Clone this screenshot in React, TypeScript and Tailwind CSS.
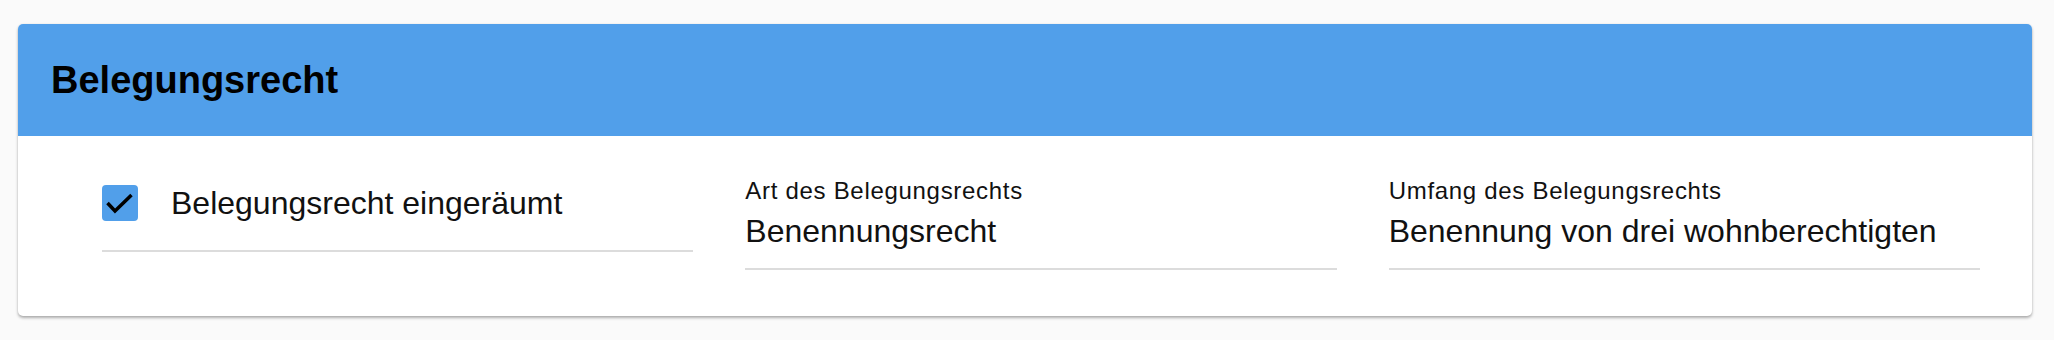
import type { ReactNode } from 'react'

const font = { fontFamily: '"Liberation Sans", Arial, sans-serif' }

function CheckField({ label, checked }: { label: string; checked: boolean }) {
  return (
    <div className="pt-[8px]">
      <div className="flex items-center gap-[33px] border-b-2 border-[#dcdcdc] pb-[29px]">
        <span className="inline-flex h-[36px] w-[36px] shrink-0 items-center justify-center rounded-[4px] bg-[#519fea]">
          {checked && (
            <svg width="36" height="36" viewBox="0 0 36 36" fill="none" aria-hidden>
              <path
                d="M5.5 18 L13 26 L29.5 10"
                stroke="#000"
                strokeWidth="3.5"
                strokeLinecap="butt"
                strokeLinejoin="miter"
              />
            </svg>
          )}
        </span>
        <span className="text-[32px] leading-[36px] text-[#111]">{label}</span>
      </div>
    </div>
  )
}

function ReadField({ label, children }: { label: string; children: ReactNode }) {
  return (
    <div className="border-b-2 border-[#dcdcdc] pb-[18px]">
      <div className="text-[24px] leading-[28px] tracking-[0.7px] text-[#111]">{label}</div>
      <div className="mt-[7px] whitespace-nowrap text-[32px] leading-[38px] text-[#111]">
        {children}
      </div>
    </div>
  )
}

export default function App() {
  return (
    <div className="min-h-[340px] bg-[#fafafa] pb-[24px] pl-[18px] pr-[22px] pt-[24px]" style={font}>
      <section className="overflow-hidden rounded-[5px] bg-white shadow-[0_2px_3px_rgba(0,0,0,0.3),0_0_2px_rgba(0,0,0,0.08)]">
        <header className="flex h-[112px] items-center bg-[#519fea] px-[33px]">
          <h2 className="text-[38px] font-bold leading-none text-black">
            Belegungsrecht
          </h2>
        </header>

        {/* three fields in one row */}
        <div className="grid grid-cols-3 items-start gap-[52px] pb-[46px] pl-[84px] pr-[52px] pt-[41px]">
          <CheckField label="Belegungsrecht eingeräumt" checked />
          <ReadField label="Art des Belegungsrechts">Benennungsrecht</ReadField>
          <ReadField label="Umfang des Belegungsrechts">Benennung von drei wohnberechtigten</ReadField>
        </div>
      </section>
    </div>
  )
}
